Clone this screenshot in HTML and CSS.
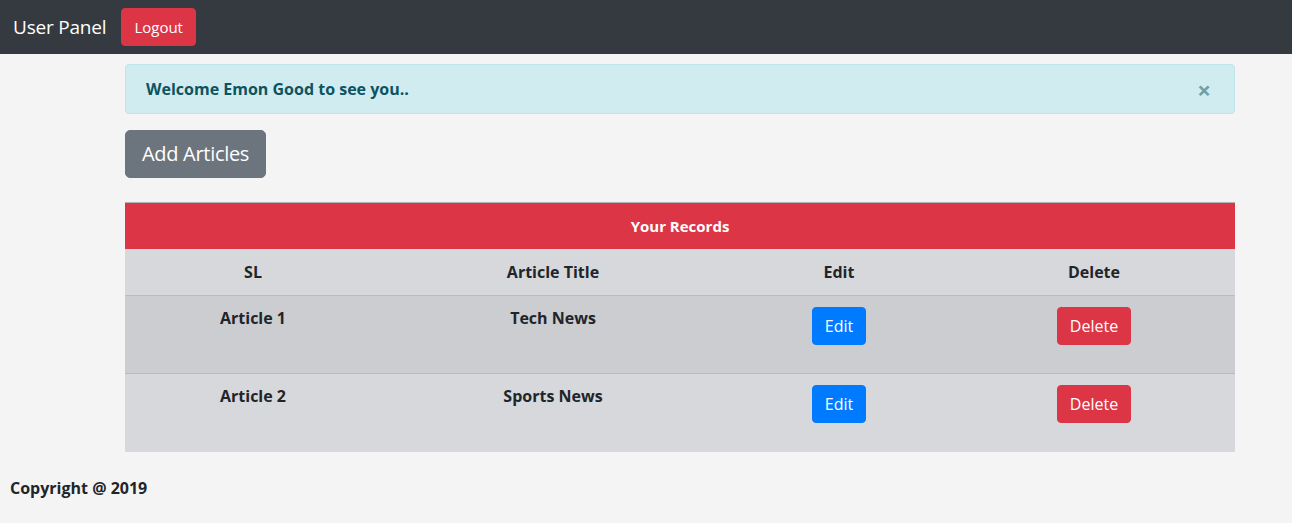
FILE: index.html
```html
<!DOCTYPE html>
<html>
<head>
<meta charset="utf-8">
<link rel="stylesheet" href="styles.css">
</head>
<body>
<nav class="navbar">
  <span class="brand">User Panel</span>
  <button class="btn btn-danger">Logout</button>
</nav>
<main class="content">
  <div class="alert">
    <strong>Welcome Emon Good to see you..</strong>
    <span class="close">&times;</span>
  </div>
  <button class="btn btn-lg btn-secondary">Add Articles</button>
  <table class="records">
    <colgroup>
      <col class="c1"><col class="c2"><col class="c3"><col class="c4">
    </colgroup>
    <thead>
      <tr class="title-row"><th colspan="4">Your Records</th></tr>
      <tr class="head-row">
        <th>SL</th>
        <th>Article Title</th>
        <th>Edit</th>
        <th>Delete</th>
      </tr>
    </thead>
    <tbody>
      <tr class="dark">
        <th>Article 1</th>
        <th>Tech News</th>
        <td><button class="btn btn-primary">Edit</button></td>
        <td><button class="btn btn-danger">Delete</button></td>
      </tr>
      <tr class="light">
        <th>Article 2</th>
        <th>Sports News</th>
        <td><button class="btn btn-primary">Edit</button></td>
        <td><button class="btn btn-danger">Delete</button></td>
      </tr>
    </tbody>
  </table>
</main>
<footer class="footer">Copyright @ 2019</footer>
</body>
</html>
```
FILE: styles.css
```css
* { box-sizing: border-box; }
body {
  margin: 0;
  background: #f4f4f4;
  font-family: "Open Sans", "Noto Sans", sans-serif;
  font-size: 16px;
  line-height: 1.5;
  color: #212529;
}
.navbar {
  background: #343a40;
  height: 54px;
  display: flex;
  align-items: center;
  padding: 0 13px;
}
.brand {
  color: #fff;
  font-size: 19px;
  margin-right: 15px;
  letter-spacing: -0.2px;
}
.btn {
  font-family: inherit;
  font-size: 16px;
  line-height: 1.5;
  border: 1px solid transparent;
  border-radius: 4px;
  padding: 6px 12px;
  color: #fff;
  cursor: pointer;
}
.navbar .btn { font-size: 15px; padding: 6px 12px; height: 38px; }
.btn-danger { background: #dc3545; border-color: #dc3545; }
.btn-primary { background: #007bff; border-color: #007bff; }
.btn-secondary { background: #6c757d; border-color: #6c757d; }
.btn-lg { font-size: 20px; padding: 8px 16px; border-radius: 5px; height: 48px; letter-spacing: -0.3px; }
.content {
  margin-left: 125px;
  width: 1110px;
  padding-top: 10px;
}
.alert {
  background: #d1ecf1;
  border: 1px solid #bee5eb;
  color: #0c5460;
  border-radius: 4px;
  height: 50px;
  padding: 0 20px;
  display: flex;
  align-items: center;
  justify-content: space-between;
  margin-bottom: 16px;
}
.close {
  font-size: 24px;
  font-weight: 700;
  opacity: .5;
  margin-right: 3px;
  line-height: 1;
  margin-top: 2px;
}
.records {
  margin-top: 24px;
  width: 1110px;
  border-collapse: collapse;
  table-layout: fixed;
}
.records th, .records td {
  text-align: center;
  vertical-align: top;
  font-weight: 700;
  padding: 0;
}
.title-row th {
  background: #dc3545;
  color: #fff;
  font-size: 15px;
  height: 46px;
  vertical-align: middle;
  border-top: 1px solid #b1b3b6;
}
.head-row th {
  background: #d6d8db;
  height: 47px;
  vertical-align: middle;
  border-bottom: 1px solid #b9bbbe;
}
.c1 { width: 256px; }
.c2 { width: 344px; }
.c3 { width: 228px; }
.c4 { width: 282px; }
.records tbody th { padding-top: 10px; }
.records tbody td { padding-top: 11px; }
.records tbody tr { height: 78px; }
.records tr.dark th, .records tr.dark td { background: #cbcdd1; border-bottom: 1px solid #b9bbbe; }
.records tr.light th, .records tr.light td { background: #d6d8db; height: 77px; }
.footer {
  padding: 24px 10px;
  font-weight: 700;
}
```
